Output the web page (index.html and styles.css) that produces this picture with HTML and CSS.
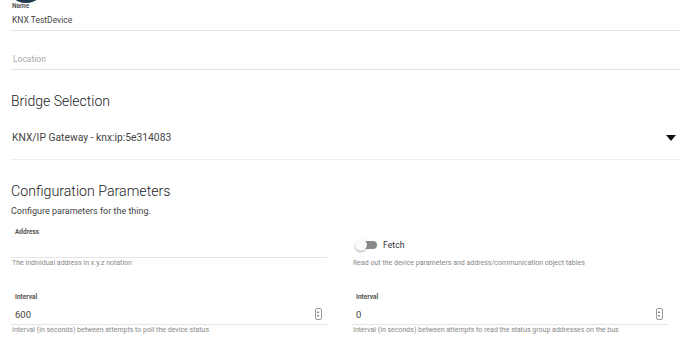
FILE: index.html
```html
<!DOCTYPE html>
<html lang="en">
<head>
  <meta charset="UTF-8" />
  <title>Thing - KNX TestDevice</title>
  <link rel="stylesheet" href="styles.css">
</head>
<body>
  <div class="avatar"></div>

  <div class="page">
    <div class="field name-field">
      <label class="field-label">Name</label>
      <div class="field-value">KNX TestDevice</div>
    </div>

    <div class="field location-field">
      <div class="field-value placeholder">Location</div>
    </div>

    <h2 class="section-title bridge-title">Bridge Selection</h2>

    <div class="select-row">
      <span>KNX/IP Gateway - knx:ip:5e314083</span>
      <span class="caret"></span>
    </div>

    <h2 class="section-title config-title">Configuration Parameters</h2>
    <p class="section-sub">Configure parameters for the thing.</p>

    <div class="params">
      <div class="param">
        <label class="param-label">Address</label>
        <div class="param-input"></div>
        <div class="param-help">The individual address in x.y.z notation</div>
      </div>

      <div class="param toggle-param">
        <div class="toggle-row">
          <span class="toggle"><span class="knob"></span></span>
          <span class="toggle-text">Fetch</span>
        </div>
        <div class="param-help">Read out the device parameters and address/communication object tables</div>
      </div>

      <div class="param">
        <label class="param-label">Interval</label>
        <div class="param-input number">
          <span>600</span>
          <span class="spinner"></span>
        </div>
        <div class="param-help">Interval (in seconds) between attempts to poll the device status</div>
      </div>

      <div class="param">
        <label class="param-label">Interval</label>
        <div class="param-input number">
          <span>0</span>
          <span class="spinner"></span>
        </div>
        <div class="param-help">Interval (in seconds) between attempts to read the status group addresses on the bus</div>
      </div>
    </div>
  </div>
</body>
</html>
```

FILE: styles.css
```css
body {
  font-family: Roboto, "Noto Sans", Arial, sans-serif;
  margin: 0;
  padding: 0;
  background-color: #ffffff;
  color: #333;
  position: relative;
  overflow: hidden;
}

.avatar {
  position: absolute;
  left: 6px;
  top: -37px;
  width: 40px;
  height: 40px;
  border-radius: 50%;
  background-color: #1f3b4d;
}

.page {
  position: relative;
  padding: 0 10px 0 11px;
}

.field {
  border-bottom: 1px solid #e4e4e4;
}

.name-field {
  height: 31px;
  padding-top: 3px;
  box-sizing: border-box;
}

.field-label {
  display: block;
  padding: 0 1px;
  font-size: 6.5px;
  font-weight: bold;
  line-height: 6px;
  color: #555;
}

.field-value {
  padding: 0 1px;
  font-size: 8.5px;
  line-height: 22px;
  color: #444;
}

.location-field {
  margin-top: 9px;
  height: 29px;
  display: flex;
  align-items: flex-end;
}

.location-field .field-value {
  line-height: 20px;
}

.placeholder {
  color: #aaa;
  font-size: 8.5px !important;
  padding-left: 2px !important;
}

.section-title {
  margin: 0;
  font-weight: 300;
  color: #222;
  font-size: 14px;
}

.bridge-title {
  margin-top: 22px;
  line-height: 18px;
}

.select-row {
  margin-top: 15px;
  height: 35px;
  border-bottom: 1px solid #eeeeee;
  display: flex;
  align-items: flex-start;
  justify-content: space-between;
  font-size: 10.3px;
  line-height: 14px;
  padding-top: 6px;
  padding-left: 1px;
  box-sizing: border-box;
  color: #444;
}

.caret {
  margin-top: 4px;
  margin-right: 4px;
  width: 0;
  height: 0;
  border-left: 5px solid transparent;
  border-right: 5px solid transparent;
  border-top: 6px solid #111;
}

.config-title {
  margin-top: 21px;
  font-size: 14.2px;
  line-height: 20px;
}

.section-sub {
  margin: 4px 0 0;
  font-size: 9px;
  line-height: 12px;
  color: #444;
}

.params {
  display: grid;
  grid-template-columns: 316px 316px;
  column-gap: 25px;
  margin-top: 10px;
}

.param {
  height: 65px;
}

.param-label {
  display: block;
  padding-left: 4px;
  font-size: 6.5px;
  font-weight: bold;
  line-height: 10px;
  color: #555;
}

.param-input {
  height: 21px;
  border-bottom: 1px solid #e4e4e4;
  box-sizing: border-box;
}

.param-input.number {
  height: 21px;
  margin-top: 2px;
  display: flex;
  align-items: center;
  justify-content: space-between;
  padding: 0 5px 0 4px;
  font-size: 9.5px;
  color: #444;
}

.spinner {
  width: 5px;
  height: 10px;
  border: 1px solid #999;
  border-radius: 2px;
  position: relative;
}

.spinner::before,
.spinner::after {
  content: "";
  position: absolute;
  left: 1px;
  width: 0;
  height: 0;
  border-left: 1.5px solid transparent;
  border-right: 1.5px solid transparent;
}

.spinner::before {
  top: 2px;
  border-bottom: 2px solid #555;
}

.spinner::after {
  bottom: 2px;
  border-top: 2px solid #555;
}

.param-help {
  margin-top: 0;
  padding-left: 1px;
  font-size: 7px;
  line-height: 10px;
  color: #888;
}

.toggle-row {
  height: 31px;
  display: flex;
  align-items: center;
  padding-left: 3px;
  padding-top: 4px;
  box-sizing: border-box;
}

.toggle {
  position: relative;
  width: 20px;
  height: 8px;
  margin-left: 2px;
  border-radius: 4px;
  background-color: #8a8a8a;
}

.knob {
  position: absolute;
  left: -2px;
  top: -2px;
  width: 12px;
  height: 12px;
  border-radius: 50%;
  background-color: #fafafa;
  box-shadow: 0 1px 2px rgba(0, 0, 0, 0.35);
}

.toggle-text {
  margin-left: 6px;
  font-size: 8.7px;
  color: #333;
}
```
